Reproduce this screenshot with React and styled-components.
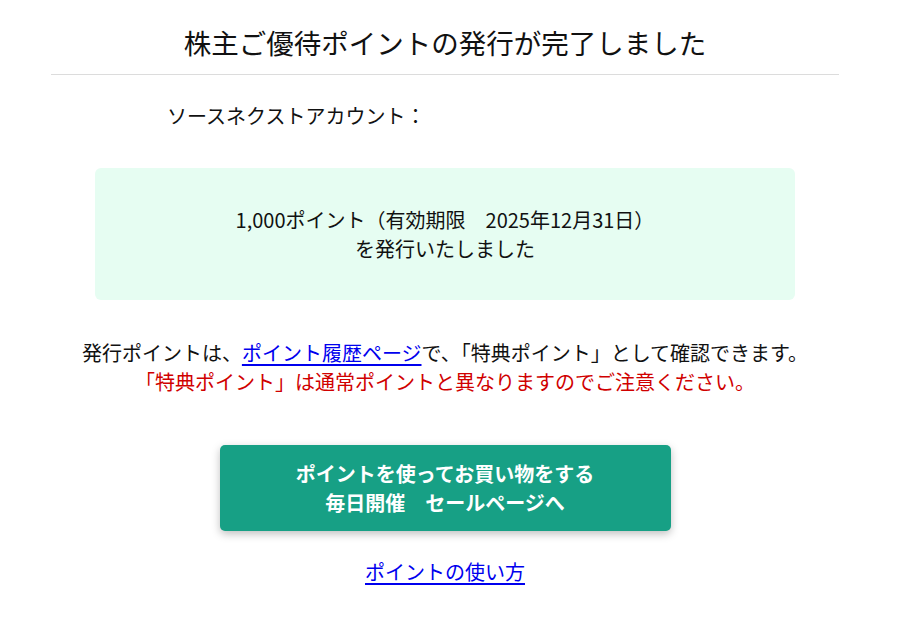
import React from "react";
import styled, { createGlobalStyle } from "styled-components";

const Global = createGlobalStyle`
  html, body { margin: 0; padding: 0; background: #fff; }
  body { font-family: "Noto Sans CJK JP", "Noto Sans", sans-serif; color: #111; }
`;

const Page = styled.main`
  width: 788px;
  margin-left: 51px;
  display: flex;
  flex-direction: column;
  align-items: center;
`;

const Title = styled.h1`
  margin: 0;
  width: 100%;
  box-sizing: border-box;
  padding: 24px 0 14px;
  border-bottom: 1px solid #dcdcdc;
  text-align: center;
  font-size: 27.5px;
  line-height: 36px;
  font-weight: 400;
`;

const Account = styled.p`
  align-self: stretch;
  margin: 26px 0 0;
  padding-left: 116px;
  font-size: 20px;
  line-height: 29px;
`;

const Notice = styled.div`
  margin-top: 38px;
  width: 700px;
  height: 132px;
  border-radius: 6px;
  background: #e6fdf2;
  display: flex;
  flex-direction: column;
  justify-content: center;
  align-items: center;
  font-size: 20px;
  line-height: 29px;
  text-align: center;
`;

const Info = styled.div`
  margin-top: 38px;
  text-align: center;
  font-size: 20px;
  line-height: 29px;
`;

const Line = styled.p`
  margin: 0;
  color: ${(p) => (p.$warn ? "#d00000" : "#111")};
`;

const Link = styled.a`
  color: #0000ee;
  text-decoration: underline;
  text-underline-offset: 3px;
`;

const ActionButton = styled.a`
  margin-top: 49px;
  width: 451px;
  height: 86px;
  box-sizing: border-box;
  border-radius: 5px;
  background: #17a085;
  box-shadow: 0 3px 8px rgba(0, 0, 0, 0.25);
  color: #fff;
  font-weight: 700;
  font-size: 20px;
  line-height: 29px;
  text-align: center;
  text-decoration: none;
  display: flex;
  flex-direction: column;
  justify-content: center;
`;

const Footer = styled.div`
  margin-top: 26px;
  font-size: 20px;
  line-height: 29px;
`;

export default function App() {
  return (
    <>
      <Global />
      <Page>
        <Title>株主ご優待ポイントの発行が完了しました</Title>
        <Account>ソースネクストアカウント：</Account>
        <Notice>
          <span>1,000ポイント（有効期限　2025年12月31日）</span>
          <span>を発行いたしました</span>
        </Notice>
        <Info>
          <Line>
            発行ポイントは、<Link href="#">ポイント履歴ページ</Link>で、「特典ポイント」として確認できます。
          </Line>
          <Line $warn>「特典ポイント」は通常ポイントと異なりますのでご注意ください。</Line>
        </Info>
        <ActionButton href="#">
          <span>ポイントを使ってお買い物をする</span>
          <span>毎日開催　セールページへ</span>
        </ActionButton>
        <Footer>
          <Link href="#">ポイントの使い方</Link>
        </Footer>
      </Page>
    </>
  );
}
